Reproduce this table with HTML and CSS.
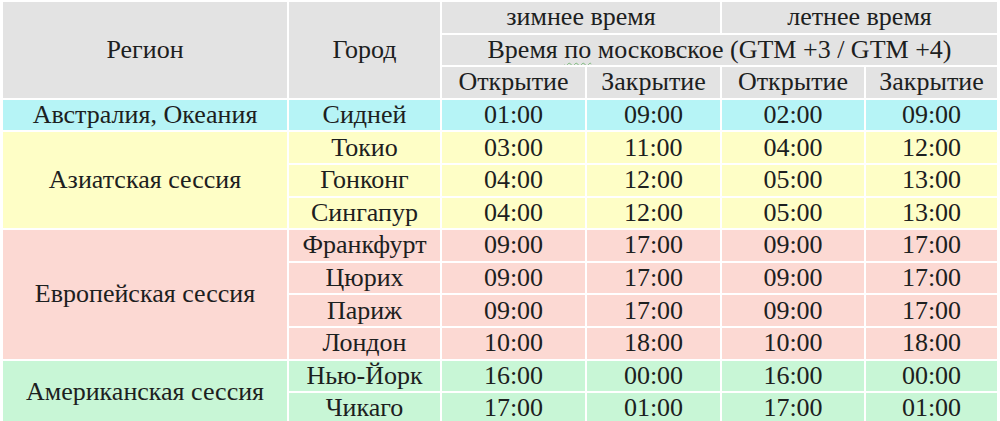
FILE: index.html
```html
<!DOCTYPE html>
<html lang="ru">
<head>
<meta charset="utf-8">
<title>Торговые сессии</title>
<link rel="stylesheet" href="styles.css">
</head>
<body>
<table class="sessions">
  <colgroup>
    <col class="c-region">
    <col class="c-city">
    <col class="c-zo">
    <col class="c-zc">
    <col class="c-lo">
    <col class="c-lc">
  </colgroup>
  <thead>
    <tr>
      <th rowspan="3">Регион</th>
      <th rowspan="3">Город</th>
      <th colspan="2">зимнее время</th>
      <th colspan="2">летнее время</th>
    </tr>
    <tr>
      <th colspan="4">Время <span class="squiggle">по</span> московское (GTM +3 / GTM +4)</th>
    </tr>
    <tr>
      <th>Открытие</th>
      <th>Закрытие</th>
      <th>Открытие</th>
      <th>Закрытие</th>
    </tr>
  </thead>
  <tbody class="oceania">
    <tr><td>Австралия, Океания</td><td>Сидней</td><td>01:00</td><td>09:00</td><td>02:00</td><td>09:00</td></tr>
  </tbody>
  <tbody class="asia">
    <tr><td rowspan="3">Азиатская сессия</td><td>Токио</td><td>03:00</td><td>11:00</td><td>04:00</td><td>12:00</td></tr>
    <tr><td>Гонконг</td><td>04:00</td><td>12:00</td><td>05:00</td><td>13:00</td></tr>
    <tr><td>Сингапур</td><td>04:00</td><td>12:00</td><td>05:00</td><td>13:00</td></tr>
  </tbody>
  <tbody class="europe">
    <tr><td rowspan="4">Европейская сессия</td><td>Франкфурт</td><td>09:00</td><td>17:00</td><td>09:00</td><td>17:00</td></tr>
    <tr><td>Цюрих</td><td>09:00</td><td>17:00</td><td>09:00</td><td>17:00</td></tr>
    <tr><td>Париж</td><td>09:00</td><td>17:00</td><td>09:00</td><td>17:00</td></tr>
    <tr><td>Лондон</td><td>10:00</td><td>18:00</td><td>10:00</td><td>18:00</td></tr>
  </tbody>
  <tbody class="america">
    <tr><td rowspan="2">Американская сессия</td><td>Нью-Йорк</td><td>16:00</td><td>00:00</td><td>16:00</td><td>00:00</td></tr>
    <tr><td>Чикаго</td><td>17:00</td><td>01:00</td><td>17:00</td><td>01:00</td></tr>
  </tbody>
</table>
</body>
</html>
```

FILE: styles.css
```css
html, body {
  margin: 0;
  padding: 0;
  background: #ffffff;
}

body {
  padding: 0 0 0 1px;
  overflow: hidden;
  font-family: "Liberation Serif", "Times New Roman", serif;
}

.sessions {
  table-layout: fixed;
  width: 998px;
  border-collapse: separate;
  border-spacing: 2px;
  font-family: "Liberation Serif", "Times New Roman", serif;
  font-size: 26px;
  color: #1c2020;
}

.c-region { width: 284px; }
.c-city { width: 151px; }
.c-zo { width: 143px; }
.c-zc { width: 133px; }
.c-lo { width: 142px; }
.c-lc { width: 131px; }

.sessions th,
.sessions td {
  padding: 0;
  height: 30.6px;
  line-height: 28px;
  text-align: center;
  vertical-align: middle;
  font-weight: normal;
  white-space: nowrap;
  overflow: hidden;
}

.sessions th {
  background: #e3e3e3;
}

.squiggle {
  text-decoration: underline wavy #7cb87c;
  text-decoration-thickness: 1px;
  text-underline-offset: 4px;
}

.oceania td { background: #b6f4f6; }
.asia td { background: #fefec6; }
.europe td { background: #fcd9d3; }
.america td { background: #c8f6d6; }
```
